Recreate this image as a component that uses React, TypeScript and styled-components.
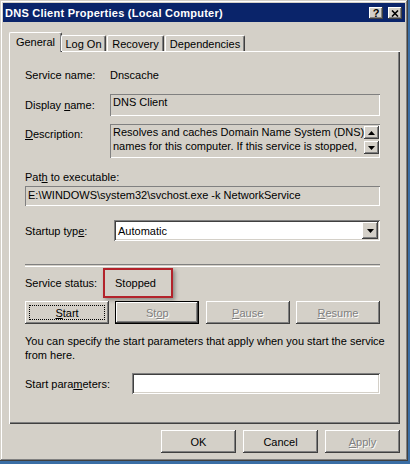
import styled, { createGlobalStyle, css } from "styled-components";

const face = "#d4d0c8";

const GlobalStyle = createGlobalStyle`
  html, body {
    margin: 0;
    padding: 0;
  }
  body {
    width: 410px;
    height: 464px;
    overflow: hidden;
    background: #3a6ea5;
    font-family: "Liberation Sans", Arial, sans-serif;
    font-size: 11px;
    color: #000;
  }
`;

const raised = css`
  box-shadow: inset -1px -1px #404040, inset 1px 1px #fff,
    inset -2px -2px #808080, inset 2px 2px ${face};
`;

const sunken = css`
  box-shadow: inset 1px 1px #808080, inset -1px -1px #fff,
    inset 2px 2px #404040, inset -2px -2px ${face};
`;

const staticEdge = css`
  box-shadow: inset 1px 1px #808080, inset -1px -1px #fff;
`;

const Window = styled.div`
  box-sizing: border-box;
  width: 408px;
  height: 461px;
  padding: 3px;
  background: ${face};
  box-shadow: inset -1px -1px #404040, inset 1px 1px ${face},
    inset -2px -2px #808080, inset 2px 2px #fff;
  display: flex;
  flex-direction: column;
`;

const TitleBar = styled.div`
  height: 19px;
  background: #0a246a;
  display: flex;
  align-items: center;
  justify-content: space-between;
  padding: 0 3px 0 2px;
`;

const Title = styled.span`
  color: #fff;
  font-weight: bold;
  font-size: 11px;
  letter-spacing: 0.25px;
  white-space: nowrap;
`;

const CaptionButtons = styled.div`
  display: flex;
  gap: 5px;
  margin-top: 1px;
`;

const CaptionButton = styled.div`
  box-sizing: border-box;
  width: 14px;
  height: 12px;
  background: ${face};
  ${raised};
  display: flex;
  align-items: center;
  justify-content: center;
  font-weight: bold;
  font-size: 11px;
  line-height: 1;
`;

const Body = styled.div`
  padding: 10px 5px 0 6px;
  display: flex;
  flex-direction: column;
`;

const TabRow = styled.div`
  display: flex;
  align-items: flex-end;
  height: 20px;
  position: relative;
  z-index: 1;
`;

const Tab = styled.div<{ $active?: boolean; $width: number }>`
  box-sizing: border-box;
  width: ${(p) => p.$width}px;
  height: ${(p) => (p.$active ? 20 : 16)}px;
  margin-bottom: ${(p) => (p.$active ? 0 : 1)}px;
  margin-right: ${(p) => (p.$active ? -1 : 1)}px;
  background: ${face};
  border-top: 1px solid #fff;
  border-left: 1px solid #fff;
  border-right: 1px solid #404040;
  border-top-left-radius: 2px;
  border-top-right-radius: 2px;
  box-shadow: inset -1px 0 #808080;
  display: flex;
  align-items: center;
  justify-content: center;
  padding-bottom: ${(p) => (p.$active ? 2 : 0)}px;
  white-space: nowrap;
`;

const Panel = styled.div`
  box-sizing: border-box;
  width: 391px;
  height: 373px;
  margin-top: -1px;
  padding: 0 20px 0 16px;
  background: ${face};
  box-shadow: inset 1px 1px #fff, inset -1px -1px #404040,
    inset -2px -2px #808080;
  display: flex;
  flex-direction: column;
`;

const FieldRow = styled.div<{ $top: number; $label: number; $height: number; $alignTop?: boolean }>`
  display: grid;
  grid-template-columns: ${(p) => p.$label}px 1fr;
  align-items: ${(p) => (p.$alignTop ? "start" : "center")};
  margin-top: ${(p) => p.$top}px;
  height: ${(p) => p.$height}px;
`;

const Label = styled.span<{ $pad?: number }>`
  white-space: nowrap;
  padding-top: ${(p) => p.$pad ?? 0}px;
`;

const Value = styled.span`
  position: relative;
  white-space: nowrap;
`;

const ReadOnlyBox = styled.div`
  box-sizing: border-box;
  height: 100%;
  padding: 1px 3px;
  line-height: 14px;
  ${staticEdge};
  white-space: nowrap;
  overflow: hidden;
`;

const DescriptionBox = styled.div`
  box-sizing: border-box;
  height: 100%;
  ${staticEdge};
  display: flex;
  justify-content: space-between;
  padding: 1px 1px 1px 3px;
`;

const DescriptionText = styled.div`
  line-height: 14px;
  white-space: nowrap;
`;

const ScrollColumn = styled.div`
  display: flex;
  flex-direction: column;
  gap: 2px;
  padding-top: 1px;
`;

const ArrowButton = styled.div<{ $w: number; $h: number }>`
  box-sizing: border-box;
  width: ${(p) => p.$w}px;
  height: ${(p) => p.$h}px;
  background: ${face};
  ${raised};
  display: flex;
  align-items: center;
  justify-content: center;
`;

const SectionLabel = styled.div<{ $top: number }>`
  margin-top: ${(p) => p.$top}px;
  line-height: 14px;
`;

const PathBox = styled.div<{ $top: number }>`
  box-sizing: border-box;
  margin-top: ${(p) => p.$top}px;
  height: 20px;
  line-height: 18px;
  padding: 0 3px;
  ${staticEdge};
  white-space: nowrap;
`;

const ComboBox = styled.div`
  box-sizing: border-box;
  height: 100%;
  background: #fff;
  ${sunken};
  display: flex;
  align-items: center;
  justify-content: space-between;
  padding: 2px 2px 2px 4px;
`;

const TextInput = styled.div`
  box-sizing: border-box;
  height: 100%;
  background: #fff;
  ${sunken};
`;

const Separator = styled.div<{ $top: number }>`
  margin-top: ${(p) => p.$top}px;
  height: 1px;
  border-top: 1px solid #808080;
  border-bottom: 1px solid #fff;
`;

const Highlight = styled.div`
  position: absolute;
  left: -12px;
  top: -9px;
  width: 70px;
  height: 30px;
  box-sizing: border-box;
  border: 2px solid #b3232b;
  box-shadow: 2px 2px 4px rgba(0, 0, 0, 0.35);
  pointer-events: none;
`;

const ButtonRow = styled.div<{ $top: number; $justify: string; $gap?: number }>`
  display: flex;
  justify-content: ${(p) => p.$justify};
  gap: ${(p) => p.$gap ?? 0}px;
  margin-top: ${(p) => p.$top}px;
`;

const Button = styled.div<{ $width: number; $disabled?: boolean; $default?: boolean; $focus?: boolean }>`
  box-sizing: border-box;
  position: relative;
  width: ${(p) => p.$width}px;
  height: 23px;
  background: ${face};
  display: flex;
  align-items: center;
  justify-content: center;
  color: ${(p) => (p.$disabled ? "#808080" : "#000")};
  text-shadow: ${(p) => (p.$disabled ? "1px 1px #fff" : "none")};
  ${(p) =>
    p.$default
      ? css`
          border: 1px solid #000;
          box-shadow: inset -1px -1px #404040, inset 1px 1px #fff,
            inset -2px -2px #808080;
        `
      : raised};
  ${(p) =>
    p.$focus &&
    css`
      &::after {
        content: "";
        position: absolute;
        inset: 4px;
        border: 1px dotted #000;
      }
    `}
`;

const Paragraph = styled.div<{ $top: number }>`
  margin-top: ${(p) => p.$top}px;
  line-height: 14px;
  white-space: nowrap;
`;

const Arrow = ({ up }: { up?: boolean }) => (
  <svg width="7" height="4" viewBox="0 0 7 4">
    <polygon points={up ? "3.5,0 7,4 0,4" : "0,0 7,0 3.5,4"} fill="#000" />
  </svg>
);

const tabs = [
  { name: "General", width: 53 },
  { name: "Log On", width: 45 },
  { name: "Recovery", width: 57 },
  { name: "Dependencies", width: 80 },
];

export default function App() {
  return (
    <>
      <GlobalStyle />
      <Window>
        <TitleBar>
          <Title>DNS Client Properties (Local Computer)</Title>
          <CaptionButtons>
            <CaptionButton>?</CaptionButton>
            <CaptionButton>
              <svg width="8" height="7" viewBox="0 0 8 7">
                <path d="M1 0.5 L7 6.5 M7 0.5 L1 6.5" stroke="#000" strokeWidth="1.6" />
              </svg>
            </CaptionButton>
          </CaptionButtons>
        </TitleBar>

        <Body>
          <TabRow>
            {tabs.map((t, i) => (
              <Tab key={t.name} $active={i === 0} $width={t.width}>
                {t.name}
              </Tab>
            ))}
          </TabRow>

          <Panel>
            <FieldRow $top={16} $label={85} $height={16}>
              <Label>Service name:</Label>
              <Value>Dnscache</Value>
            </FieldRow>

            <FieldRow $top={11} $label={85} $height={22}>
              <Label>
                Display <u>n</u>ame:
              </Label>
              <ReadOnlyBox>DNS Client</ReadOnlyBox>
            </FieldRow>

            <FieldRow $top={8} $label={85} $height={34} $alignTop>
              <Label $pad={4}>
                <u>D</u>escription:
              </Label>
              <DescriptionBox>
                <DescriptionText>
                  Resolves and caches Domain Name System (DNS)
                  <br />
                  names for this computer. If this service is stopped,
                </DescriptionText>
                <ScrollColumn>
                  <ArrowButton $w={15} $h={13}>
                    <Arrow up />
                  </ArrowButton>
                  <ArrowButton $w={15} $h={13}>
                    <Arrow />
                  </ArrowButton>
                </ScrollColumn>
              </DescriptionBox>
            </FieldRow>

            <SectionLabel $top={12}>
              Pat<u>h</u> to executable:
            </SectionLabel>
            <PathBox $top={2}>E:\WINDOWS\system32\svchost.exe -k NetworkService</PathBox>

            <FieldRow $top={14} $label={89} $height={21}>
              <Label>
                Startup typ<u>e</u>:
              </Label>
              <ComboBox>
                <span>Automatic</span>
                <ArrowButton $w={16} $h={17}>
                  <Arrow />
                </ArrowButton>
              </ComboBox>
            </FieldRow>

            <Separator $top={23} />

            <FieldRow $top={8} $label={90} $height={16}>
              <Label>Service status:</Label>
              <Value>
                Stopped
                <Highlight />
              </Value>
            </FieldRow>

            <ButtonRow $top={10} $justify="space-between">
              <Button $width={84} $focus>
                <span>
                  <u>S</u>tart
                </span>
              </Button>
              <Button $width={84} $disabled $default>
                <span>
                  St<u>o</u>p
                </span>
              </Button>
              <Button $width={84} $disabled>
                <span>
                  <u>P</u>ause
                </span>
              </Button>
              <Button $width={84} $disabled>
                <span>
                  <u>R</u>esume
                </span>
              </Button>
            </ButtonRow>

            <Paragraph $top={10}>
              You can specify the start parameters that apply when you start the service
              <br />
              from here.
            </Paragraph>

            <FieldRow $top={11} $label={107} $height={21}>
              <Label>
                Start para<u>m</u>eters:
              </Label>
              <TextInput />
            </FieldRow>
          </Panel>

          <ButtonRow $top={6} $justify="flex-end" $gap={7}>
            <Button $width={75}>OK</Button>
            <Button $width={75}>Cancel</Button>
            <Button $width={75} $disabled>
              <span>
                <u>A</u>pply
              </span>
            </Button>
          </ButtonRow>
        </Body>
      </Window>
    </>
  );
}
